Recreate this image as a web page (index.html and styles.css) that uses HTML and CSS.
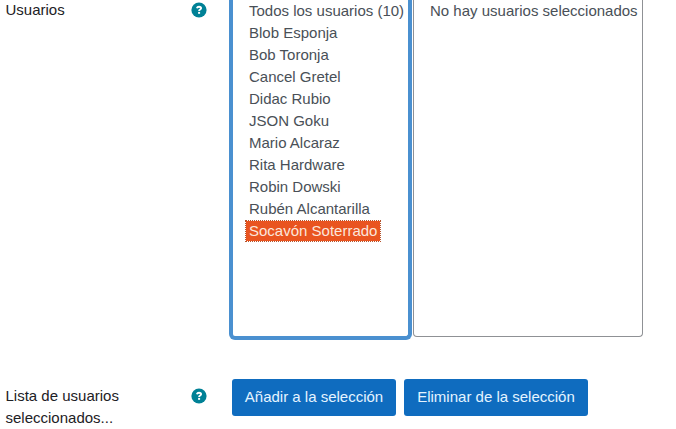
FILE: index.html
```html
<!DOCTYPE html>
<html lang="es">
<head>
<meta charset="utf-8">
<title>Usuarios</title>
<link rel="stylesheet" href="styles.css">
</head>
<body>
<form class="form">
  <div class="row row-users">
    <div class="label"><span>Usuarios</span>
      <svg class="help" viewBox="0 0 16 16"><circle cx="8" cy="8" r="7.6"/><path d="M5.9 6.3C6.2 5.2 7 4.7 8 4.7c1.2 0 2.1.6 2.1 1.6C10.1 7.6 8.1 7.5 8.1 9"/><rect x="7.1" y="9.9" width="2" height="1.9"/></svg>
    </div>
    <div class="lists">
      <ul class="list list-focus">
        <li>Todos los usuarios (10)</li>
        <li>Blob Esponja</li>
        <li>Bob Toronja</li>
        <li>Cancel Gretel</li>
        <li>Didac Rubio</li>
        <li>JSON Goku</li>
        <li>Mario Alcaraz</li>
        <li>Rita Hardware</li>
        <li>Robin Dowski</li>
        <li>Rubén Alcantarilla</li>
        <li class="selected">Socavón Soterrado</li>
      </ul>
      <ul class="list list-chosen">
        <li>No hay usuarios seleccionados</li>
      </ul>
    </div>
  </div>
  <div class="row">
    <div class="label label-actions"><span>Lista de usuarios seleccionados...</span>
      <svg class="help" viewBox="0 0 16 16"><circle cx="8" cy="8" r="7.6"/><path d="M5.9 6.3C6.2 5.2 7 4.7 8 4.7c1.2 0 2.1.6 2.1 1.6C10.1 7.6 8.1 7.5 8.1 9"/><rect x="7.1" y="9.9" width="2" height="1.9"/></svg>
    </div>
    <div class="actions">
      <button type="button" class="btn btn-add">Añadir a la selección</button>
      <button type="button" class="btn btn-remove">Eliminar de la selección</button>
    </div>
  </div>
</form>
</body>
</html>
```
FILE: styles.css
```css
* { box-sizing: border-box; }
body {
  margin: 0;
  height: 429px;
  overflow: hidden;
  background: #fff;
  color: #1d2125;
  font: 15px/22px "Liberation Sans", Arial, sans-serif;
}
.row {
  display: grid;
  grid-template-columns: 229px 1fr;
  align-items: start;
}
.row-users { height: 379px; }
.label {
  display: flex;
  justify-content: space-between;
  align-items: flex-start;
  padding: 0 22.5px 0 5.5px;
  margin-top: -1px;
}
.label span { width: 130px; }
.label-actions { margin-top: 6px; }
.help {
  width: 16px;
  height: 16px;
  margin-top: 3.4px;
  fill: #008196;
}
.help path {
  fill: none;
  stroke: #fff;
  stroke-width: 1.9;
}
.help rect { fill: #fff; }
.lists {
  display: flex;
  align-items: flex-start;
  gap: 1px;
}
.list {
  margin: 0;
  list-style: none;
  color: #495057;
  white-space: nowrap;
}
.list-focus {
  width: 183px;
  height: 340px;
  padding: 0 0 0 12px;
  border: 4px solid #4a90d0;
  border-top: 0;
  border-radius: 0 0 6px 6px;
}
.list-chosen {
  width: 230px;
  height: 337px;
  padding: 0 0 0 12px;
  border: 1px solid #8f9195;
  border-top: 0;
  border-radius: 0 0 4px 4px;
}
.list li {
  width: max-content;
  height: 22px;
  padding: 0 4px;
}
.list .selected {
  padding: 0 3px;
  color: #fbe6dc;
  background: #e95420 padding-box;
  border: 1px dotted #b5532c;
  line-height: 20px;
}
.actions {
  display: flex;
  gap: 8px;
  padding-left: 3px;
}
.btn {
  height: 37px;
  padding: 0 0 2px;
  border: 0;
  border-radius: 3px;
  background: #0f6cbf;
  color: #e4f4ff;
  font: inherit;
}
.btn-add { width: 164px; }
.btn-remove { width: 184px; }
```
